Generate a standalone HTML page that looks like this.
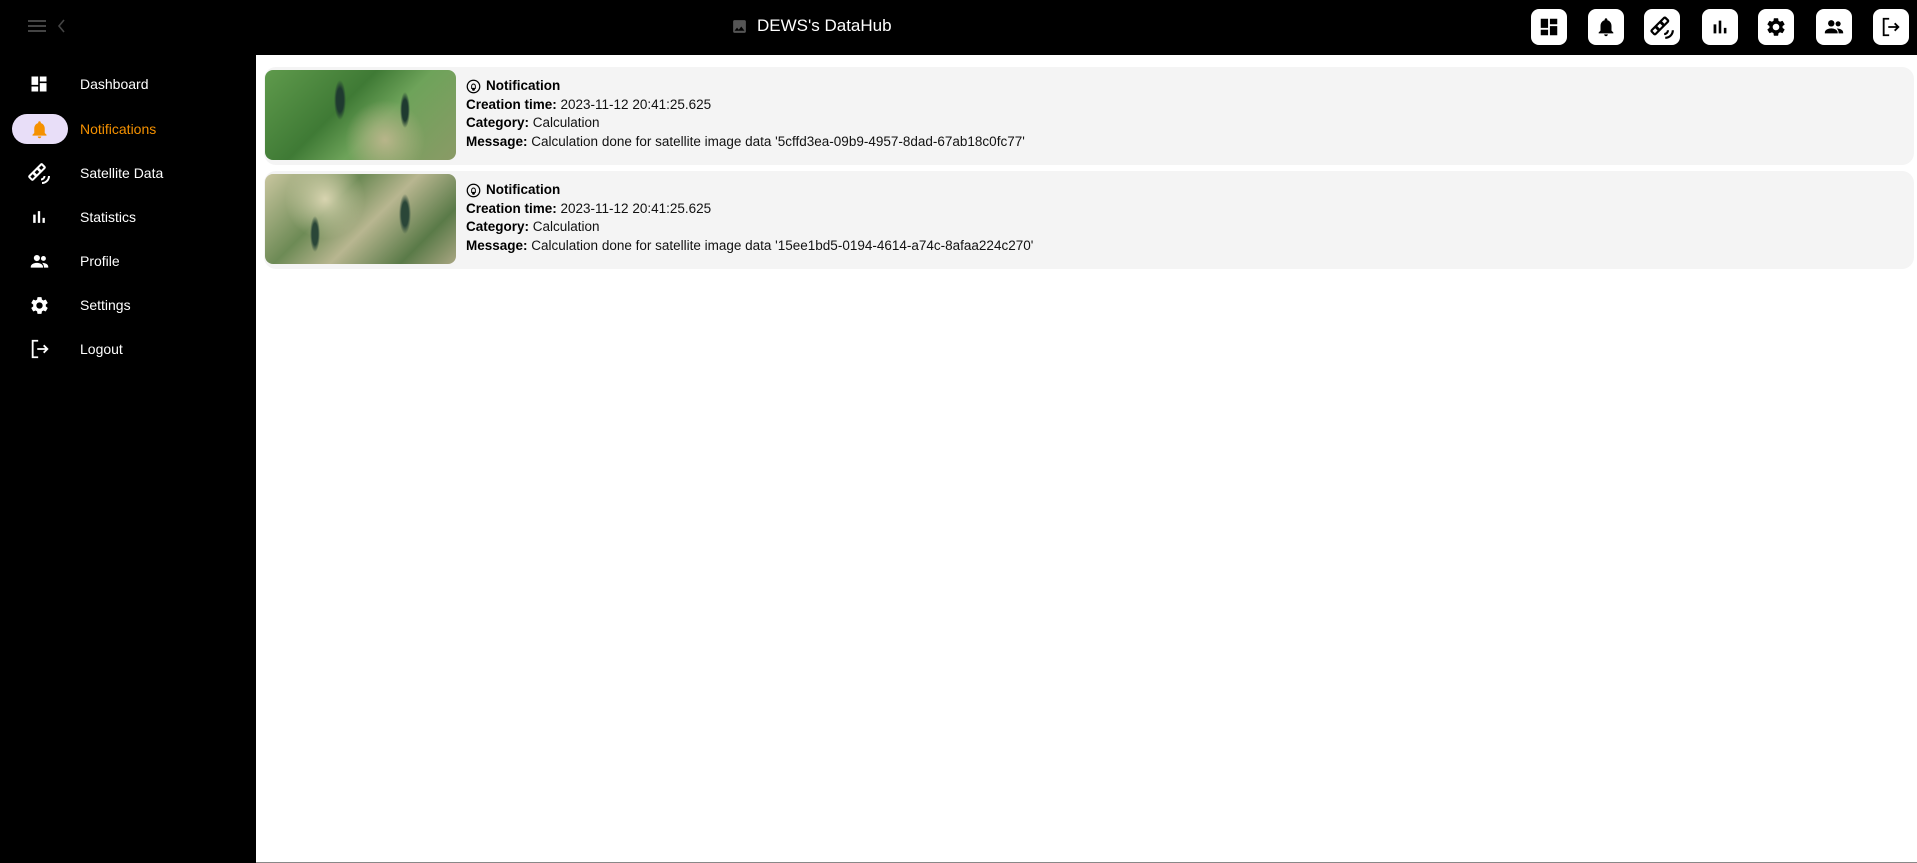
<!DOCTYPE html>
<html><head><meta charset="utf-8"><style>
*{box-sizing:border-box;margin:0;padding:0}
body{width:1917px;height:863px;background:#000;font-family:"Liberation Sans",sans-serif;position:relative;overflow:hidden}
.hdr{position:absolute;left:0;top:0;width:1917px;height:55px;background:#000}
.title{position:absolute;left:731px;top:16px;color:#fff;font-size:17px;display:flex;align-items:center;gap:9px}
.btn{position:absolute;top:9px;width:36px;height:36px;background:#fff;border-radius:8px;display:flex;align-items:center;justify-content:center}
.main{position:absolute;left:256px;top:55px;width:1661px;height:808px;background:#fff;border-bottom:1px solid #888}
.item{position:absolute;left:0;width:256px;height:36px;display:flex;align-items:center;color:#fff;font-size:14px}
.item svg{position:absolute;left:29px}
.item span{position:absolute;left:80px}
.pill{position:absolute;left:12px;top:114px;width:56px;height:30px;border-radius:15px;background:#e8def8}
.card{position:absolute;left:264px;width:1650px;height:98px;background:#f4f4f4;border-radius:12px}
.img{position:absolute;left:1px;top:3px;width:191px;height:90px;border-radius:8px}
.txt{position:absolute;left:202px;top:10px;font-size:13.5px;line-height:18.7px;color:#111}
.txt b{font-weight:bold;color:#000}
</style></head><body>
<div class="hdr">
<svg style="position:absolute;left:28px;top:20px" width="18" height="13"><rect y="0" width="18" height="2" fill="#444"/><rect y="5" width="18" height="2" fill="#444"/><rect y="10" width="18" height="2" fill="#444"/></svg>
<svg style="position:absolute;left:57px;top:19px" width="8" height="14"><path d="M7 1L2 7l5 6" stroke="#444" stroke-width="1.6" fill="none"/></svg>
<div class="title"><svg width="17" height="17" viewBox="0 0 24 24"><path fill="#555" d="M21 19V5c0-1.1-.9-2-2-2H5c-1.1 0-2 .9-2 2v14c0 1.1.9 2 2 2h14c1.1 0 2-.9 2-2zM8.5 13.5l2.5 3 3.5-4.5 4.5 6H5l3.5-4.5z"/></svg>DEWS's DataHub</div>
<div class="btn" style="left:1531px"><svg width="22" height="22" viewBox="0 0 24 24"><path d="M3 13h8V3H3v10zm0 8h8v-6H3v6zm10 0h8V11h-8v10zm0-18v6h8V3h-8z"/></svg></div>
<div class="btn" style="left:1588px"><svg width="22" height="22" viewBox="0 0 24 24"><path d="M12 22c1.1 0 2-.9 2-2h-4c0 1.1.9 2 2 2zm6-6v-5c0-3.07-1.63-5.64-4.5-6.32V4c0-.83-.67-1.5-1.5-1.5s-1.5.67-1.5 1.5v.68C7.64 5.360 6 7.92 6 11v5l-2 2v1h16v-1l-2-2z"/></svg></div>
<div class="btn" style="left:1644px"><svg width="26" height="26" viewBox="0 0 24 24"><g transform="rotate(-45 10 11)"><rect x="0" y="7.5" width="20" height="7" rx="2"/><rect x="2" y="9.5" width="3.5" height="3" fill="#fff"/><rect x="8.2" y="9.5" width="3.5" height="3" fill="#fff"/><rect x="14.4" y="9.5" width="3.5" height="3" fill="#fff"/></g><path d="M15 22a7 7 0 0 0 7-7M14 18.5a3.5 3.5 0 0 0 3.5-3.5" stroke="#000" stroke-width="2" fill="none"/></svg></div>
<div class="btn" style="left:1702px"><svg width="22" height="22" viewBox="0 0 24 24"><path d="M5 9.2h3V19H5zM10.6 5h2.8v14h-2.8zm5.6 8H19v6h-2.8z"/></svg></div>
<div class="btn" style="left:1758px"><svg width="22" height="22" viewBox="0 0 24 24"><path d="M19.14 12.94c.04-.3.06-.61.06-.94 0-.32-.02-.64-.07-.94l2.03-1.58a.49.49 0 0 0 .12-.61l-1.92-3.32a.49.49 0 0 0-.59-.22l-2.39.96c-.5-.38-1.03-.7-1.62-.94l-.36-2.54a.48.48 0 0 0-.48-.41h-3.84c-.24 0-.43.17-.47.41l-.36 2.54c-.59.24-1.13.57-1.62.94l-2.39-.96a.49.49 0 0 0-.59.22L2.74 8.87c-.12.21-.08.47.12.61l2.03 1.58c-.05.3-.09.63-.09.94s.02.64.07.94l-2.03 1.58a.49.49 0 0 0-.12.61l1.92 3.32c.12.22.37.29.59.22l2.39-.96c.5.38 1.03.7 1.62.94l.36 2.54c.05.24.24.41.48.41h3.84c.24 0 .44-.17.47-.41l.36-2.54c.59-.24 1.13-.56 1.62-.94l2.39.96c.22.08.47 0 .59-.22l1.92-3.32c.12-.22.07-.47-.12-.61l-2.01-1.58zM12 15.6c-1.98 0-3.6-1.62-3.6-3.6s1.62-3.6 3.6-3.6 3.6 1.62 3.6 3.6-1.62 3.6-3.6 3.6z"/></svg></div>
<div class="btn" style="left:1816px"><svg width="22" height="22" viewBox="0 0 24 24"><circle cx="9" cy="8" r="3.5"/><circle cx="16.5" cy="8.5" r="2.8"/><path d="M2 18c0-3 4-4.5 7-4.5s7 1.5 7 4.5v1H2zM15 13.6c3 0 7 1.2 7 4.4v1h-5v-1c0-1.8-.8-3.2-2-4.4z"/></svg></div>
<div class="btn" style="left:1873px"><svg width="22" height="22" viewBox="0 0 24 24"><path d="M10 3H4v18h6" stroke="#000" stroke-width="2" fill="none"/><path d="M9 12h11M16 8l4 4-4 4" stroke="#000" stroke-width="2" fill="none"/></svg></div>
</div>

<div class="pill"></div>
<div class="item" style="top:66px"><svg width="20" height="20" viewBox="0 0 24 24"><path fill="#fff" d="M3 13h8V3H3v10zm0 8h8v-6H3v6zm10 0h8V11h-8v10zm0-18v6h8V3h-8z"/></svg><span>Dashboard</span></div>
<div class="item" style="top:111px;color:#f59100"><svg width="21" height="21" viewBox="0 0 24 24"><path fill="#f59100" d="M12 22c1.1 0 2-.9 2-2h-4c0 1.1.9 2 2 2zm6-6v-5c0-3.07-1.63-5.64-4.5-6.32V4c0-.83-.67-1.5-1.5-1.5s-1.5.67-1.5 1.5v.68C7.64 5.36 6 7.92 6 11v5l-2 2v1h16v-1l-2-2z"/></svg><span>Notifications</span></div>
<div class="item" style="top:155px"><svg width="24" height="24" viewBox="0 0 24 24" style="left:27px"><g transform="rotate(-45 10 11)"><rect x="0" y="7.5" width="20" height="7" rx="2" fill="#fff"/><rect x="2" y="9.5" width="3.5" height="3" fill="#000"/><rect x="8.2" y="9.5" width="3.5" height="3" fill="#000"/><rect x="14.4" y="9.5" width="3.5" height="3" fill="#000"/></g><path d="M15 22a7 7 0 0 0 7-7M14 18.5a3.5 3.5 0 0 0 3.5-3.5" stroke="#fff" stroke-width="2" fill="none"/></svg><span>Satellite Data</span></div>
<div class="item" style="top:199px"><svg width="20" height="20" viewBox="0 0 24 24"><path fill="#fff" d="M5 9.2h3V19H5zM10.6 5h2.8v14h-2.8zm5.6 8H19v6h-2.8z"/></svg><span>Statistics</span></div>
<div class="item" style="top:243px"><svg width="21" height="21" viewBox="0 0 24 24" fill="#fff"><circle cx="9" cy="8" r="3.5"/><circle cx="16.5" cy="8.5" r="2.8"/><path d="M2 18c0-3 4-4.5 7-4.5s7 1.5 7 4.5v1H2zM15 13.6c3 0 7 1.2 7 4.4v1h-5v-1c0-1.8-.8-3.2-2-4.4z"/></svg><span>Profile</span></div>
<div class="item" style="top:287px"><svg width="21" height="21" viewBox="0 0 24 24"><path fill="#fff" d="M19.14 12.94c.04-.3.06-.61.06-.94 0-.32-.02-.64-.07-.94l2.03-1.58a.49.49 0 0 0 .12-.61l-1.92-3.32a.49.49 0 0 0-.59-.22l-2.39.96c-.5-.38-1.03-.7-1.62-.94l-.36-2.54a.48.48 0 0 0-.48-.41h-3.84c-.24 0-.43.17-.47.41l-.36 2.54c-.59.24-1.13.57-1.62.94l-2.39-.96a.49.49 0 0 0-.59.22L2.74 8.87c-.12.21-.08.47.12.61l2.03 1.58c-.05.3-.09.63-.09.94s.02.64.07.94l-2.03 1.58a.49.49 0 0 0-.12.61l1.92 3.32c.12.22.37.29.59.22l2.39-.96c.5.38 1.03.7 1.62.94l.36 2.54c.05.24.24.41.48.41h3.84c.24 0 .44-.17.47-.41l.36-2.54c.59-.24 1.13-.56 1.62-.94l2.39.96c.22.08.47 0 .59-.22l1.92-3.32c.12-.22.07-.47-.12-.61l-2.01-1.58zM12 15.6c-1.98 0-3.6-1.62-3.6-3.6s1.62-3.6 3.6-3.6 3.6 1.62 3.6 3.6-1.62 3.6-3.6 3.6z"/></svg><span>Settings</span></div>
<div class="item" style="top:331px"><svg width="22" height="22" viewBox="0 0 24 24"><path d="M10 3H4v18h6" stroke="#fff" stroke-width="2" fill="none"/><path d="M9 12h11M16 8l4 4-4 4" stroke="#fff" stroke-width="2" fill="none"/></svg><span>Logout</span></div>

<div class="main"></div>
<div class="card" style="top:67px">
<div class="img" style="background:radial-gradient(ellipse 6px 20px at 75px 30px,#1f3a30 60%,transparent 100%),radial-gradient(ellipse 5px 18px at 140px 40px,#1f3a30 60%,transparent 100%),radial-gradient(circle at 120px 70px,#b8b58a 0,transparent 40px),linear-gradient(135deg,#5f9a4c,#3f7a35 40%,#6ea35a 60%,#8a9a66)"></div>
<div class="txt"><div style="display:flex;align-items:center;gap:5px"><svg width="15" height="15" viewBox="0 0 24 24"><circle cx="12" cy="12" r="10" stroke="#000" stroke-width="2" fill="none"/><path d="M12 18a1.5 1.5 0 0 0 1.5-1.5h-3A1.5 1.5 0 0 0 12 18zm3-3v-3.5c0-1.8-.9-3.2-3-3.5-2.1.3-3 1.7-3 3.5V15z" stroke="#000" stroke-width="1.5" fill="none"/></svg><b>Notification</b></div>
<div><b>Creation time:</b> 2023-11-12 20:41:25.625</div>
<div><b>Category:</b> Calculation</div>
<div><b>Message:</b> Calculation done for satellite image data '5cffd3ea-09b9-4957-8dad-67ab18c0fc77'</div></div>
</div>
<div class="card" style="top:171px">
<div class="img" style="background:radial-gradient(ellipse 6px 20px at 140px 40px,#2a4638 60%,transparent 100%),radial-gradient(ellipse 5px 18px at 50px 60px,#2a4638 60%,transparent 100%),radial-gradient(circle at 60px 25px,#d8d4b0 0,transparent 40px),linear-gradient(135deg,#c9c69f,#6d8a55 35%,#b8b690 55%,#5a7a48 80%,#a9a682)"></div>
<div class="txt"><div style="display:flex;align-items:center;gap:5px"><svg width="15" height="15" viewBox="0 0 24 24"><circle cx="12" cy="12" r="10" stroke="#000" stroke-width="2" fill="none"/><path d="M12 18a1.5 1.5 0 0 0 1.5-1.5h-3A1.5 1.5 0 0 0 12 18zm3-3v-3.5c0-1.8-.9-3.2-3-3.5-2.1.3-3 1.7-3 3.5V15z" stroke="#000" stroke-width="1.5" fill="none"/></svg><b>Notification</b></div>
<div><b>Creation time:</b> 2023-11-12 20:41:25.625</div>
<div><b>Category:</b> Calculation</div>
<div><b>Message:</b> Calculation done for satellite image data '15ee1bd5-0194-4614-a74c-8afaa224c270'</div></div>
</div>
</body></html>
